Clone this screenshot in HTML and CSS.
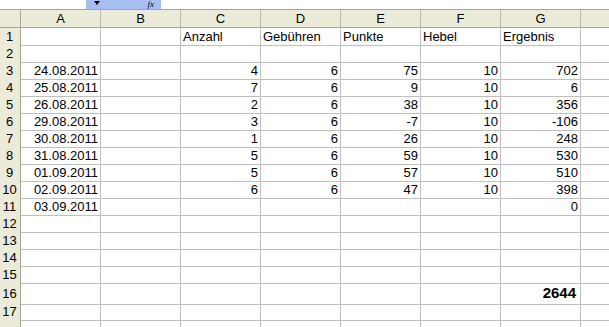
FILE: index.html
```html
<!DOCTYPE html>
<html lang="de">

<head>
    <meta charset="UTF-8">
    <meta name="viewport" content="width=device-width, initial-scale=1.0">
    <title>Tabelle1</title>
    <link rel="stylesheet" href="styles.css">
</head>

<body>
    <div id="formulabar">
        <div id="namebox">
            <span class="arrow"></span>
            <span class="fx">fx</span>
        </div>
    </div>
    <div id="sheet">
        <div class="row head">
            <div class="rh"></div>
            <div class="ch">A</div>
            <div class="ch">B</div>
            <div class="ch">C</div>
            <div class="ch">D</div>
            <div class="ch">E</div>
            <div class="ch">F</div>
            <div class="ch">G</div>
            <div class="ch"></div>
        </div>
    </div>
    <script>
        var data = [
            ["", "", "Anzahl", "Gebühren", "Punkte", "Hebel", "Ergebnis"],
            [],
            ["24.08.2011", "", 4, 6, 75, 10, 702],
            ["25.08.2011", "", 7, 6, 9, 10, 6],
            ["26.08.2011", "", 2, 6, 38, 10, 356],
            ["29.08.2011", "", 3, 6, -7, 10, -106],
            ["30.08.2011", "", 1, 6, 26, 10, 248],
            ["31.08.2011", "", 5, 6, 59, 10, 530],
            ["01.09.2011", "", 5, 6, 57, 10, 510],
            ["02.09.2011", "", 6, 6, 47, 10, 398],
            ["03.09.2011", "", "", "", "", "", 0],
            [], [], [], [],
            ["", "", "", "", "", "", 2644],
            []
        ];
        var sheet = document.getElementById("sheet");
        for (var r = 0; r < data.length; r++) {
            var row = document.createElement("div");
            row.className = "row";
            if (r == 15) {
                row.className += " tall";
            }
            var rh = document.createElement("div");
            rh.className = "rh";
            rh.textContent = r + 1;
            row.appendChild(rh);
            for (var c = 0; c < 8; c++) {
                var cell = document.createElement("div");
                cell.className = "cell";
                var v = data[r][c];
                if (v !== undefined && v !== "") {
                    cell.textContent = v;
                    if (r > 0) cell.className += " num";
                    if (r == 15) cell.className += " bold";
                }
                row.appendChild(cell);
            }
            sheet.appendChild(row);
        }
        // angeschnittene Zeile 18 ohne Nummer
        var last = document.createElement("div");
        last.className = "row";
        last.innerHTML = '<div class="rh"></div>' + new Array(9).join('<div class="cell"></div>');
        sheet.appendChild(last);
    </script>
</body>

</html>
```

FILE: styles.css
```css
* {
    margin: 0;
    padding: 0;
    box-sizing: border-box;
}

body {
    width: 609px;
    height: 327px;
    overflow: hidden;
    background-color: #fff;
    font-family: "Liberation Sans", Arial, sans-serif;
    font-size: 13px;
    color: #000;
}

#formulabar {
    height: 9px;
    padding-left: 86px;
}

#namebox {
    width: 75px;
    height: 9px;
    background-color: #a7bff0;
    display: flex;
    justify-content: space-between;
    align-items: flex-start;
    padding: 0 7px 0 8px;
}

#namebox .arrow {
    width: 0;
    height: 0;
    margin-top: 1px;
    border-left: 3px solid transparent;
    border-right: 3px solid transparent;
    border-top: 4px solid #000;
}

#namebox .fx {
    font-family: "Liberation Serif", serif;
    font-style: italic;
    font-size: 9px;
    line-height: 8px;
}

#sheet {
    width: 661px;
}

.row {
    display: grid;
    grid-template-columns: 21px repeat(8, 80px);
    height: 17px;
}

.row.head {
    height: 19px;
    border-top: 1px solid #a5a496;
}

.row.tall {
    height: 20px;
}

.rh {
    background-color: #ecead9;
    border-right: 1px solid #a5a496;
    border-bottom: 1px solid #c8c6b6;
    text-align: center;
    line-height: 17px;
    padding-right: 1px;
}

.row.tall .rh {
    line-height: 21px;
}

.ch {
    background-color: #ecead9;
    border-right: 1px solid #bcbaab;
    border-bottom: 1px solid #a5a496;
    text-align: center;
    line-height: 17px;
}

.head .rh {
    border-bottom: 1px solid #a5a496;
}

.cell {
    border-right: 1px solid #c0c0c0;
    border-bottom: 1px solid #c0c0c0;
    line-height: 17px;
    padding: 0 2px;
    white-space: nowrap;
    overflow: hidden;
}

.row.tall .cell {
    line-height: 20px;
}

.num {
    text-align: right;
}

.bold {
    font-weight: bold;
    font-size: 15px;
    padding-right: 4px;
}
```
